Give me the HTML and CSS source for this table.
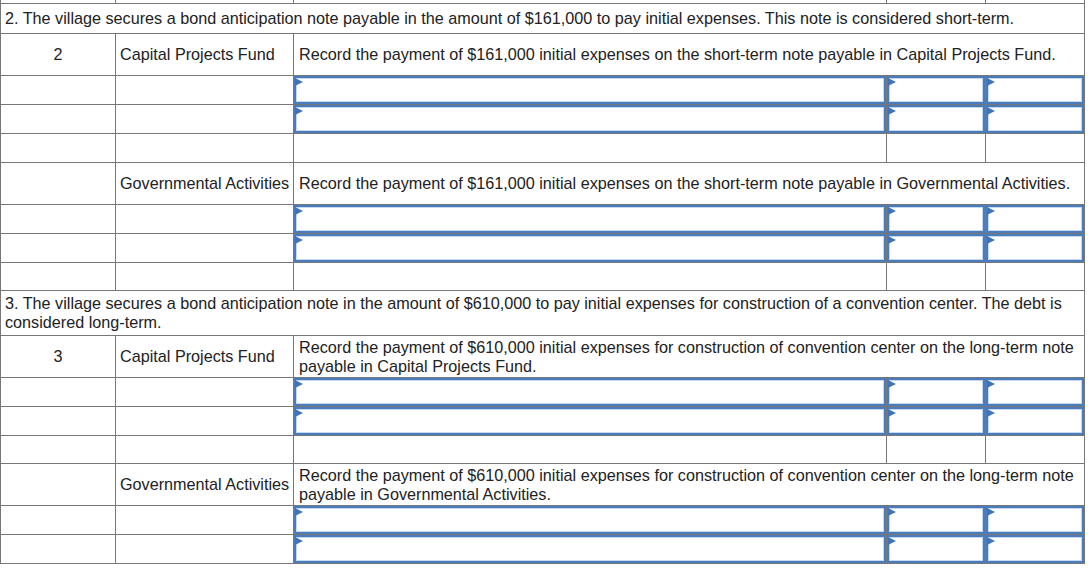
FILE: index.html
```html
<!DOCTYPE html>
<html lang="en">
<head>
<meta charset="utf-8">
<title>Journal entries</title>
<link rel="stylesheet" href="styles.css">
</head>
<body>
<div class="wrap">
<table class="journal">
  <colgroup>
    <col class="c-no">
    <col class="c-fund">
    <col class="c-desc">
    <col class="c-dr">
    <col class="c-cr">
  </colgroup>
  <tbody>
    <tr class="r-stub"><td></td><td></td><td></td><td></td><td></td></tr>

    <tr class="r-head"><td colspan="5" class="head">2. The village secures a bond anticipation note payable in the amount of $161,000 to pay initial expenses. This note is considered short-term.</td></tr>
    <tr class="r-desc"><td class="num">2</td><td class="fund">Capital Projects Fund</td><td colspan="3" class="desc">Record the payment of $161,000 initial expenses on the short-term note payable in Capital Projects Fund.</td></tr>
    <tr class="r-in"><td></td><td></td><td class="inp"><div class="box"></div></td><td class="inp"><div class="box"></div></td><td class="inp"><div class="box"></div></td></tr>
    <tr class="r-in"><td></td><td></td><td class="inp"><div class="box"></div></td><td class="inp"><div class="box"></div></td><td class="inp"><div class="box"></div></td></tr>
    <tr class="r-gap r-gap-tall"><td></td><td></td><td></td><td></td><td></td></tr>
    <tr class="r-desc"><td class="num"></td><td class="fund">Governmental Activities</td><td colspan="3" class="desc">Record the payment of $161,000 initial expenses on the short-term note payable in Governmental Activities.</td></tr>
    <tr class="r-in"><td></td><td></td><td class="inp"><div class="box"></div></td><td class="inp"><div class="box"></div></td><td class="inp"><div class="box"></div></td></tr>
    <tr class="r-in"><td></td><td></td><td class="inp"><div class="box"></div></td><td class="inp"><div class="box"></div></td><td class="inp"><div class="box"></div></td></tr>
    <tr class="r-gap"><td></td><td></td><td></td><td></td><td></td></tr>

    <tr class="r-head"><td colspan="5" class="head">3. The village secures a bond anticipation note in the amount of $610,000 to pay initial expenses for construction of a convention center. The debt is considered long-term.</td></tr>
    <tr class="r-desc"><td class="num">3</td><td class="fund">Capital Projects Fund</td><td colspan="3" class="desc">Record the payment of $610,000 initial expenses for construction of convention center on the long-term note payable in Capital Projects Fund.</td></tr>
    <tr class="r-in"><td></td><td></td><td class="inp"><div class="box"></div></td><td class="inp"><div class="box"></div></td><td class="inp"><div class="box"></div></td></tr>
    <tr class="r-in"><td></td><td></td><td class="inp"><div class="box"></div></td><td class="inp"><div class="box"></div></td><td class="inp"><div class="box"></div></td></tr>
    <tr class="r-gap"><td></td><td></td><td></td><td></td><td></td></tr>
    <tr class="r-desc"><td class="num"></td><td class="fund">Governmental Activities</td><td colspan="3" class="desc">Record the payment of $610,000 initial expenses for construction of convention center on the long-term note payable in Governmental Activities.</td></tr>
    <tr class="r-in"><td></td><td></td><td class="inp"><div class="box"></div></td><td class="inp"><div class="box"></div></td><td class="inp"><div class="box"></div></td></tr>
    <tr class="r-in"><td></td><td></td><td class="inp"><div class="box"></div></td><td class="inp"><div class="box"></div></td><td class="inp"><div class="box"></div></td></tr>
  </tbody>
</table>
</div>
</body>
</html>
```
FILE: styles.css
```css
html, body {
  margin: 0;
  padding: 0;
  background: #ffffff;
}

.wrap {
  overflow: hidden;
  height: 576px;
}

.journal {
  margin-top: -20px;
  border-collapse: collapse;
  table-layout: fixed;
  width: 1084px;
  font-family: "Liberation Sans", Arial, sans-serif;
  font-size: 16.2px;
  color: #222222;
}

.c-no { width: 115px; }
.c-fund { width: 178px; }
.c-desc { width: 593px; }
.c-dr { width: 99px; }
.c-cr { width: 99px; }

.journal td {
  border: 1px solid #777777;
  padding: 0;
  vertical-align: middle;
}

.r-stub { height: 23px; }
.r-head { height: 30px; }
.r-desc { height: 42px; }
.r-in { height: 29px; }
.r-gap { height: 28px; }
.r-gap-tall { height: 29px; }

.head {
  padding: 3px 4px !important;
  text-align: left;
}

.num {
  text-align: center;
}

.fund {
  padding: 0 0 0 4px !important;
  white-space: nowrap;
  overflow: hidden;
}

.desc {
  padding: 0 5px !important;
}

.inp {
  position: relative;
}

.box {
  position: relative;
  box-sizing: border-box;
  height: 28px;
  border: 2px solid #4a7cbc;
  box-shadow: inset 0 0 0 1px #c6d8ef;
  background: #ffffff;
}

.box::before {
  content: "";
  position: absolute;
  left: -1px;
  top: 0;
  width: 0;
  height: 0;
  border-left: 8px solid #3f74ba;
  border-top: 4px solid transparent;
  border-bottom: 4px solid transparent;
}
```
